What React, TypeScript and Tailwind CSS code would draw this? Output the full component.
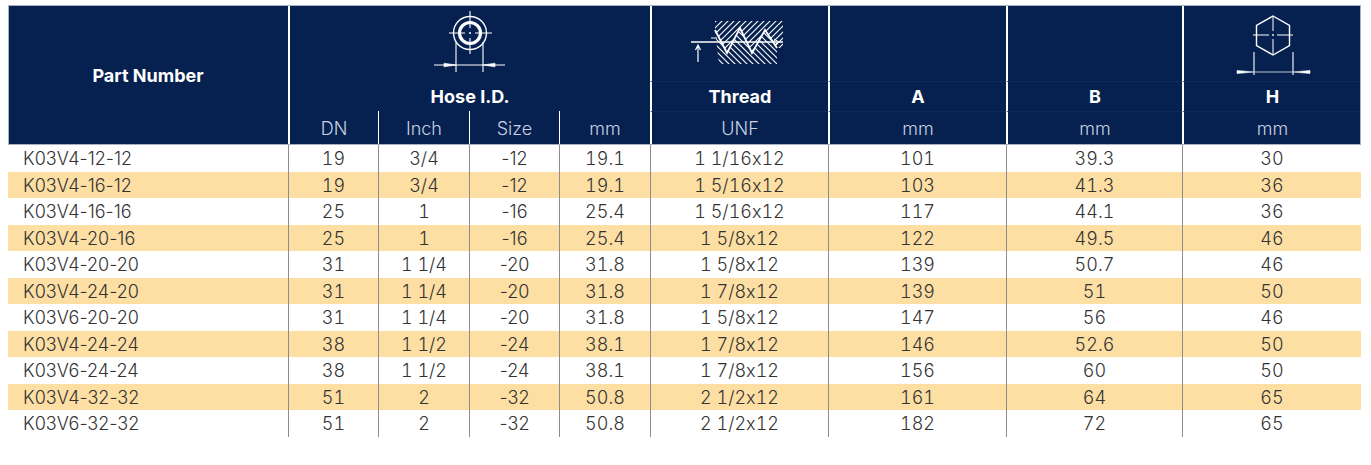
import React from "react";

const rows = [
  ["K03V4-12-12", "19", "3/4", "-12", "19.1", "1 1/16x12", "101", "39.3", "30"],
  ["K03V4-16-12", "19", "3/4", "-12", "19.1", "1 5/16x12", "103", "41.3", "36"],
  ["K03V4-16-16", "25", "1", "-16", "25.4", "1 5/16x12", "117", "44.1", "36"],
  ["K03V4-20-16", "25", "1", "-16", "25.4", "1 5/8x12", "122", "49.5", "46"],
  ["K03V4-20-20", "31", "1 1/4", "-20", "31.8", "1 5/8x12", "139", "50.7", "46"],
  ["K03V4-24-20", "31", "1 1/4", "-20", "31.8", "1 7/8x12", "139", "51", "50"],
  ["K03V6-20-20", "31", "1 1/4", "-20", "31.8", "1 5/8x12", "147", "56", "46"],
  ["K03V4-24-24", "38", "1 1/2", "-24", "38.1", "1 7/8x12", "146", "52.6", "50"],
  ["K03V6-24-24", "38", "1 1/2", "-24", "38.1", "1 7/8x12", "156", "60", "50"],
  ["K03V4-32-32", "51", "2", "-32", "50.8", "2 1/2x12", "161", "64", "65"],
  ["K03V6-32-32", "51", "2", "-32", "50.8", "2 1/2x12", "182", "72", "65"],
];

const cols = "grid grid-cols-[280px_90px_91px_90px_91px_178px_178px_176px_179px]";

const HoseIcon = () => (
  <svg width="80" height="70" viewBox="0 0 80 70" fill="none" stroke="white">
    <circle cx="40" cy="28" r="16.5" strokeWidth="1.4" />
    <circle cx="40" cy="28" r="10.5" strokeWidth="3.2" />
    <path d="M19 28H35M45 28H62M40 6V23M40 33V49" strokeWidth="1.1" />
    <circle cx="40" cy="28" r="1" fill="white" stroke="none" />
    <path d="M26 37V67M53 37V67M4 60H75" strokeWidth="1.1" />
    <path d="M26 60L14 58.2V61.8Z M53 60L65 58.2V61.8Z" fill="white" strokeWidth="0.6" />
  </svg>
);

const ThreadIcon = () => {
  const prof = "30,12 42,35 55,10 67,35 80,12 92,30";
  const up: string[] = [];
  const dn: string[] = [];
  for (let k = -50; k < 110; k += 6) {
    up.push(`M${k} 48L${k + 48} 0`);
    dn.push(`M${k} 0L${k + 48} 48`);
  }
  return (
    <svg width="110" height="48" viewBox="0 0 110 48" fill="none" stroke="white">
      <defs>
        <clipPath id="thUp">
          <polygon points={`30,3 98,3 98,30 ${prof.split(" ").reverse().join(" ")}`} />
        </clipPath>
        <clipPath id="thDn">
          <polygon points={`${prof} 92,46 34,46`} />
        </clipPath>
      </defs>
      <path d={up.join("")} strokeWidth="1.1" clipPath="url(#thUp)" />
      <path d={dn.join("")} strokeWidth="1.1" clipPath="url(#thDn)" />
      <polyline points={prof} strokeWidth="1.8" />
      <path d="M6 24H98" strokeWidth="1.5" />
      <path d="M13 27V44M10.5 32L13 27L15.5 32" strokeWidth="1.2" />
      <path d="M26 20H32M89 21L94 24L89 27" strokeWidth="1" />
    </svg>
  );
};

const HexIcon = () => (
  <svg width="80" height="70" viewBox="0 0 80 70" fill="none" stroke="white">
    <polygon points="40,6 56.5,15.5 56.5,35.5 40,45 23.5,35.5 23.5,15.5" strokeWidth="1.4" />
    <path d="M20 25H36M44 25H60M40 6V21M40 29V45" strokeWidth="1" />
    <circle cx="40" cy="25" r="0.9" fill="white" stroke="none" />
    <path d="M21 42V65M60 42V65" strokeWidth="1.1" />
    <path d="M21 62H60" strokeWidth="0.9" stroke="#cfd6e4" />
    <path d="M21 62L4 60.4V63.6Z M60 62L77 60.4V63.6Z" fill="white" strokeWidth="0.5" />
  </svg>
);

export default function App() {
  const title = "text-[18px] font-bold text-white";
  const unit = "text-[18px] font-light text-[#c8d0e2]";
  const faint = "border-t border-t-[#0e2a5a]";
  return (
    <div className="min-h-screen bg-white pl-[8px] pt-[5px] font-['Inter',sans-serif] [font-feature-settings:'calt'_0]">
      <div className="w-[1353px]">
        <div
          className={`${cols} grid-rows-[76px_30px_34px] bg-[#06214f] outline outline-[#a9b2c3] -outline-offset-1`}
        >
          <div className={`row-span-3 flex items-center justify-center ${title}`}>Part Number</div>
          <div className="col-span-4 flex justify-center border-l-2 border-white">
            <HoseIcon />
          </div>
          <div className="flex justify-center border-l-2 border-white pt-[13px]">
            <ThreadIcon />
          </div>
          <div className="border-l-2 border-white" />
          <div className="border-l-2 border-white" />
          <div className="flex justify-center border-l-2 border-white pt-[5px]">
            <HexIcon />
          </div>

          <div className={`col-span-4 flex items-center justify-center border-l-2 border-white ${title}`}>
            Hose I.D.
          </div>
          {["Thread", "A", "B", "H"].map((t) => (
            <div key={t} className={`flex items-center justify-center border-l-2 border-l-white ${faint} ${title}`}>
              {t}
            </div>
          ))}

          <div className={`flex items-center justify-center border-l-2 border-white ${unit}`}>DN</div>
          <div className={`flex items-center justify-center border-l-[1.5px] border-white ${unit}`}>Inch</div>
          <div className={`flex items-center justify-center border-l-[1.5px] border-white ${unit}`}>Size</div>
          <div className={`flex items-center justify-center border-l-[1.5px] border-white ${unit}`}>mm</div>
          {["UNF", "mm", "mm", "mm"].map((t, i) => (
            <div key={i} className={`flex items-center justify-center border-l-2 border-l-white ${faint} ${unit}`}>
              {t}
            </div>
          ))}
        </div>

        {rows.map((r, i) => (
          <div
            key={r[0]}
            className={`${cols} h-[26.5px] text-[18px] font-light text-[#333333] ${i % 2 === 1 ? "bg-[#fddfa4]" : "bg-white"}`}
          >
            {r.map((c, j) =>
              j === 0 ? (
                <div key={j} className="flex items-center pl-[15px]">
                  {c}
                </div>
              ) : (
                <div
                  key={j}
                  className={`flex items-center justify-center border-l border-[#8d8d8d] ${j === 3 ? "" : "tabular-nums"}`}
                >
                  {c}
                </div>
              ),
            )}
          </div>
        ))}
      </div>
    </div>
  );
}
